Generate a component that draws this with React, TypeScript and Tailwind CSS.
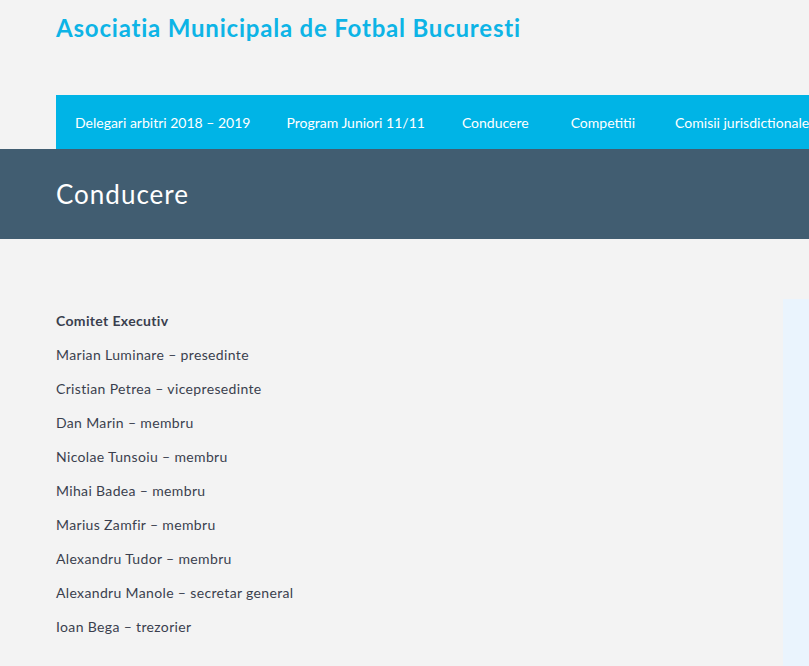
const navItems = ["Delegari arbitri 2018 – 2019", "Program Juniori 11/11", "Conducere", "Competitii", "Comisii jurisdictionale"];

const members = [
	"Marian Luminare – presedinte",
	"Cristian Petrea – vicepresedinte",
	"Dan Marin – membru",
	"Nicolae Tunsoiu – membru",
	"Mihai Badea – membru",
	"Marius Zamfir – membru",
	"Alexandru Tudor – membru",
	"Alexandru Manole – secretar general",
	"Ioan Bega – trezorier",
];

export default function App() {
	return (
		<div className="w-[809px] h-[666px] overflow-hidden bg-[#f3f3f3] font-['Lato',sans-serif]">
			<header className="pl-[56px]">
				<h1 className="pt-[12px] h-[95px] text-[24px] font-bold leading-[32px] text-[#0db4e6] tracking-[0.8px]">
					Asociatia Municipala de Fotbal Bucuresti
				</h1>
				<nav className="flex h-[54px] items-center bg-[#00b4e6] whitespace-nowrap text-[14px] text-white">
					<a href="#" className="pl-[19px] pr-[18px]">{navItems[0]}</a>
					<a href="#" className="px-[18px]">{navItems[1]}</a>
					<a href="#" className="pl-[19px] pr-[21px]">{navItems[2]}</a>
					<a href="#" className="px-[21px]">{navItems[3]}</a>
					<a href="#" className="px-[19px]">{navItems[4]}</a>
				</nav>
			</header>

			<div className="flex h-[90px] items-center bg-[#415d71] pl-[56px]">
				<h2 className="text-[26px] text-white tracking-[1px]">Conducere</h2>
			</div>

			<div className="flex mt-[60px]">
				<main className="w-[783px] pl-[56px] pt-[12px] text-[14px] text-[#3a3f4e] tracking-[0.35px]">
					<p className="font-bold leading-[20px] mb-[14px]">Comitet Executiv</p>
					{members.map((m) => (
						<p key={m} className="leading-[20px] mb-[14px]">
							{m}
						</p>
					))}
				</main>
				<aside className="flex-1 h-[400px] bg-[#eaf4fd]" />
			</div>
		</div>
	);
}
